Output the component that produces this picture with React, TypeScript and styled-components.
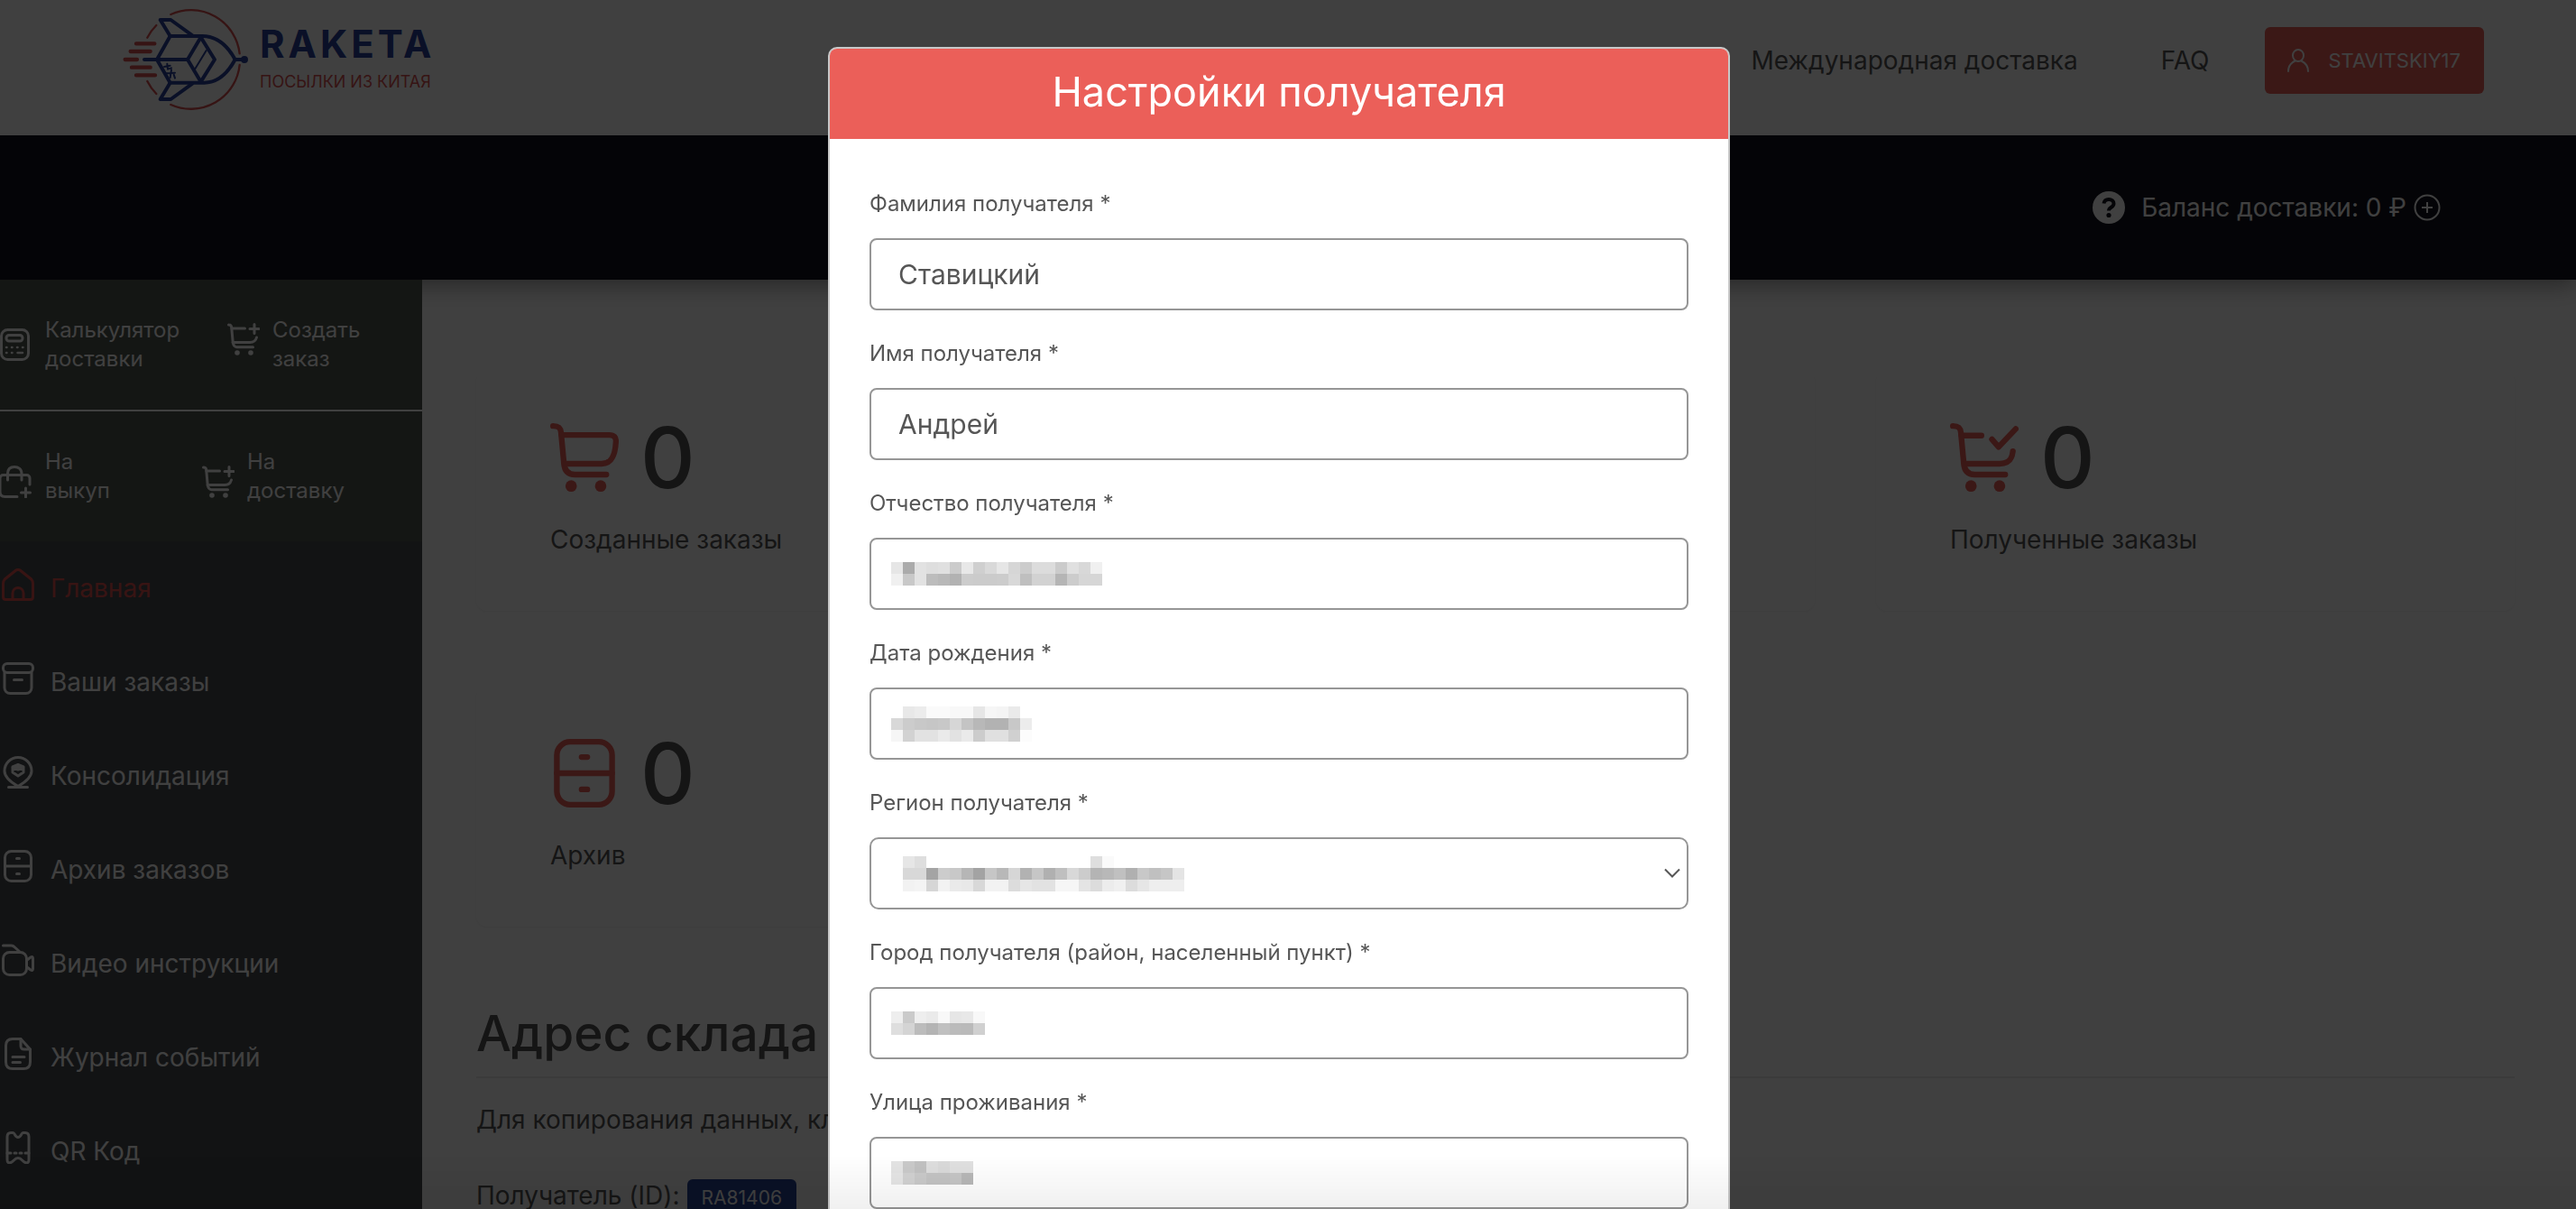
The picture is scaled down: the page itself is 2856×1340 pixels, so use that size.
import React from 'react';
import styled, { createGlobalStyle } from 'styled-components';

const font = 'Inter, "Open Sans", "Noto Sans", sans-serif';
const red = '#eb5f59';
const ink = '#565656';

const GlobalStyle = createGlobalStyle`
  *, *::before, *::after { box-sizing: border-box; }
  body { margin: 0; font-family: ${font}; color: ${ink}; background: #fff; }
  a { color: inherit; text-decoration: none; }
  button, input, select { font: inherit; }
  h1, h2, p { margin: 0; font-weight: 400; }
`;

const Page = styled.div`
  height: 100vh;
  overflow: hidden;
  display: flex;
  flex-direction: column;
`;

/* ---------- top bars ---------- */

const Header = styled.header`
  position: relative;
  z-index: 1;
  flex: none;
  height: 150px;
  display: flex;
  align-items: center;
  justify-content: space-between;
  padding: 0 102px 16px 136px;
  background: #fff;
`;

const Logo = styled.a`
  display: flex;
  align-items: center;
  gap: 12px;
  padding-bottom: 4px;
`;

const LogoText = styled.span`
  display: flex;
  flex-direction: column;
  gap: 8px;
`;

const LogoName = styled.strong`
  font-size: 42px;
  line-height: 44px;
  font-weight: 700;
  letter-spacing: 4px;
  color: #28409c;
`;

const LogoTagline = styled.span`
  font-size: 18px;
  line-height: 24px;
  color: #d84f4f;
`;

const Nav = styled.nav`
  display: flex;
  align-items: center;
  font-size: 28px;
  line-height: 40px;
  gap: 92px;
`;

const NavEnd = styled.div`
  display: flex;
  align-items: center;
  gap: 62px;
`;

const UserButton = styled.button`
  display: flex;
  align-items: center;
  gap: 20px;
  height: 74px;
  padding: 0 26px 0 24px;
  border: 0;
  border-radius: 6px;
  background: ${red};
  color: #fff;
  font-size: 22px;
`;

const BalanceBar = styled.div`
  flex: none;
  height: 160px;
  display: flex;
  align-items: center;
  justify-content: flex-end;
  padding-right: 150px;
  background: #13131c;
  color: #fff;
  font-size: 28px;
  line-height: 40px;
  box-shadow: 0 6px 24px rgba(0, 0, 0, 0.4);
`;

const Balance = styled.span`
  margin: 0 8px 0 18px;
`;

const IconButton = styled.button`
  display: flex;
  padding: 0;
  border: 0;
  background: none;
  color: inherit;
`;

/* ---------- sidebar ---------- */

const Columns = styled.div`
  flex: 1;
  min-height: 0;
  display: flex;
`;

const Sidebar = styled.aside`
  position: relative;
  flex: none;
  width: 468px;
  background: #484c50;
  color: #fff;
`;

const QuickRow = styled.div<{ $first: number; $line?: boolean }>`
  display: grid;
  grid-template-columns: ${(p) => p.$first}px 1fr;
  align-items: center;
  height: ${(p) => (p.$line ? 146 : 144)}px;
  border-bottom: ${(p) => (p.$line ? '2px solid #fff' : '0')};
  background: #505750;
`;

const QuickLink = styled.a`
  display: flex;
  align-items: center;
  gap: 14px;
  font-size: 24px;
  line-height: 32px;
`;

const QuickText = styled.span<{ $width: number }>`
  width: ${(p) => p.$width}px;
`;

const Menu = styled.nav`
  display: flex;
  flex-direction: column;
`;

const MenuItem = styled.a<{ $active?: boolean }>`
  display: flex;
  align-items: center;
  gap: 18px;
  height: 104px;
  padding-left: 2px;
  font-size: 28px;
  line-height: 40px;
  color: ${(p) => (p.$active ? '#e0504e' : '#fff')};
  svg { margin-bottom: 8px; }
`;

/* ---------- dashboard ---------- */

const Main = styled.main`
  flex: 1;
  min-width: 0;
  padding: 101px 68px 0 60px;
`;

const Cards = styled.div`
  display: grid;
  grid-template-columns: repeat(3, 1fr);
  gap: 84px 68px;
`;

const Card = styled.section`
  height: 266px;
  padding: 45px 82px;
  border-radius: 12px;
  box-shadow: 0 1px 3px rgba(0, 0, 0, 0.06);
`;

const Counter = styled.div`
  display: flex;
  align-items: center;
  gap: 24px;
  height: 102px;
  font-size: 94px;
  line-height: 102px;
  font-weight: 500;
`;

const CardLabel = styled.p`
  margin-top: 20px;
  font-size: 28px;
  line-height: 40px;
`;

const Title = styled.h1`
  margin-top: 82px;
  padding-bottom: 12px;
  border-bottom: 2px solid #ececec;
  font-size: 55px;
  line-height: 72px;
  font-weight: 500;
`;

const Note = styled.p`
  margin-top: 26px;
  font-size: 28px;
  line-height: 40px;
`;

const Recipient = styled.div`
  display: flex;
  align-items: baseline;
  gap: 8px;
  margin-top: 44px;
  font-size: 28px;
  line-height: 40px;
`;

const Badge = styled.button`
  height: 42px;
  padding: 0 16px;
  border: 0;
  border-radius: 6px;
  background: #2a4496;
  color: #fff;
  font-size: 21px;
`;

/* ---------- modal ---------- */

const Backdrop = styled.div`
  position: fixed;
  inset: 0;
  z-index: 2;
  overflow: hidden;
  display: flex;
  justify-content: center;
  align-items: flex-start;
  padding: 52px 20px 52px 0;
  background: rgba(0, 0, 0, 0.75);
`;

const Dialog = styled.div`
  flex: none;
  width: 1000px;
  max-width: 100%;
  border: 2px solid #c8c8c8;
  border-radius: 10px;
  background: #fff;
  overflow: hidden;
`;

const DialogTitle = styled.h2`
  height: 100px;
  padding-bottom: 4px;
  background: ${red};
  color: #fff;
  font-size: 45px;
  line-height: 96px;
  text-align: center;
`;

const Form = styled.form`
  display: flex;
  flex-direction: column;
  gap: 30px;
  padding: 54px 44px;
`;

const FieldGroup = styled.div`
  display: flex;
  flex-direction: column;
  gap: 20px;
`;

const FieldLabel = styled.label`
  font-size: 24px;
  line-height: 36px;
`;

const FieldBox = styled.div`
  display: grid;
  align-items: center;
  & > * { grid-area: 1 / 1; }
`;

const Input = styled.input`
  width: 100%;
  height: 80px;
  padding: 0 30px;
  border: 2px solid #969696;
  border-radius: 8px;
  background: transparent;
  color: ${ink};
  font-size: 30px;
  outline: none;
`;

const Select = styled.select`
  appearance: none;
  width: 100%;
  height: 80px;
  padding: 0 30px;
  border: 2px solid #969696;
  border-radius: 10px;
  background: transparent;
  color: ${ink};
  font-size: 30px;
`;

const Chevron = styled.svg`
  justify-self: end;
  margin-right: 8px;
  pointer-events: none;
`;

const Mosaic = styled.svg<{ $inset: number }>`
  margin-left: ${(p) => p.$inset}px;
  pointer-events: none;
`;

const BottomShade = styled.div`
  position: fixed;
  inset: auto 0 0 0;
  z-index: 3;
  height: 60px;
  background: linear-gradient(rgba(0, 0, 0, 0), rgba(0, 0, 0, 0.06));
  pointer-events: none;
`;

/* ---------- icons ---------- */

type IconName =
  | 'calc' | 'cartPlus' | 'bagPlus' | 'home' | 'box' | 'pin' | 'drawer'
  | 'video' | 'doc' | 'ticket' | 'cart' | 'cartCheck';

const glyphs: Record<IconName, React.ReactNode> = {
  calc: (
    <>
      <rect x="1.500" y="1.500" width="30" height="33" rx="7" />
      <rect x="7" y="7.500" width="18" height="6.500" rx="3" />
      <path d="M7 21h.5M13 21h.5M19 21h.5M25 21h.5M7 27h.5M13 27h.5M19.500 27h5.500" strokeWidth="2.500" />
    </>
  ),
  cartPlus: (
    <>
      <path d="M1.500 2c2 0 3 .6 3.200 2.800l1.400 15.200c.3 4.500 1.700 6.700 4.500 6.700H28.500" />
      <path d="M5 6h14.500M6 21.500h19c4 0 6.500-1.500 7.500-5.500M30 1.500v10M25 6.500h10" />
      <circle cx="11" cy="33" r="2.800" fill="currentColor" stroke="none" />
      <circle cx="26" cy="33" r="2.800" fill="currentColor" stroke="none" />
    </>
  ),
  bagPlus: (
    <>
      <path d="M33 21v-7c0-2-1.500-3.500-3.500-3.500h-26C1.500 10.500 0 12 0 14v15c0 3.500 2 5.500 5.500 5.500H19" />
      <path d="M8.500 16V9c0-5 3-7.500 7.500-7.500S24 4 24 9v7M28.500 25v10M23.500 30h10" />
    </>
  ),
  home: (
    <>
      <path d="M1.500 17c0-2 .5-3.500 1.800-5L14.500 3c2.200-1.900 4.800-1.900 7 0l11.200 9c1.300 1.500 1.800 3 1.800 5v14.500c0 2-1 3-3 3h-27c-2 0-3-1-3-3z" />
      <path d="M12 34v-6.500c0-8 12-8 12 0V34" />
    </>
  ),
  box: (
    <>
      <rect x="1.500" y="1.500" width="33" height="10" rx="4.500" />
      <path d="M3 11.500V28c0 4 2.500 6.500 6.500 6.500h17c4 0 6.500-2.500 6.500-6.500V11.500M13.500 19.500h9" />
    </>
  ),
  pin: (
    <>
      <path d="M7.500 34.500h21M18 33.500C10 29 3 24 3 16.500a15 15 0 0 1 30 0C33 24 26 29 18 33.500z" />
      <path d="M12 13l6 2 6-2v5l-6 4-6-4z" />
      <path d="M12 12l6-2.500 6 2.500-6 2z" fill="currentColor" />
    </>
  ),
  drawer: (
    <>
      <rect x="3.500" y="1.500" width="29" height="33" rx="7" />
      <path d="M3.500 18h29M16.500 9.500h3M16.500 26.500h3" />
    </>
  ),
  video: (
    <>
      <rect x="1.500" y="9.500" width="26" height="25" rx="7" />
      <path d="M1.500 2h9c2 0 3 1 4 2l6 5.500M28 18l4-3c1.500-1 2.500-.5 2.500 1.500v11c0 2-1 2.500-2.500 1.500l-4-3" />
    </>
  ),
  doc: (
    <>
      <path d="M21 1.500H12C7 1.500 4.500 4 4.500 9v18c0 5 2.500 7.500 7.500 7.500h12c5 0 7.500-2.500 7.500-7.500V13z" />
      <path d="M21 1.500V9c0 3 1 4 4 4h6.500M12 21.500h13M12 27.500h8.500" />
    </>
  ),
  ticket: (
    <>
      <path d="M6 6c0-3 1-4.500 4-4.500h2.500c2 0 2 5 5.500 5s3.500-5 5.500-5H26c3 0 4 1.500 4 4.500v25c0 3-1 4.500-4 3.500-3-1-4-5-8-5s-5 4-8 5-4-.5-4-3.500z" />
      <path d="M6 24h4M14 24h2M20 24h2M26 24h4" />
    </>
  ),
  cart: (
    <>
      <path d="M1.500 1.500c3 0 4 1 4.200 3.500L7.200 21c.3 4 2.300 6 5.800 6h16.500" />
      <path d="M6 6.200h25c2.500 0 3.700 1.200 3.500 3.700-.4 7.500-2.500 11.400-7.500 11.400H7.500" />
      <circle cx="11" cy="33" r="3" fill="currentColor" stroke="none" />
      <circle cx="26.500" cy="33" r="3" fill="currentColor" stroke="none" />
    </>
  ),
  cartCheck: (
    <>
      <path d="M6 6.500h10.500M22 8.500l3.500 4 9-9.500" />
      <path d="M1.500 1.500c3 0 4 1 4.200 3.500L7.200 21c.3 4 2.300 6 5.800 6h16" />
      <path d="M7.500 21.300H26c4.500 0 6.500-2 7-6.500" />
      <circle cx="11" cy="33" r="3" fill="currentColor" stroke="none" />
      <circle cx="26" cy="33" r="3" fill="currentColor" stroke="none" />
    </>
  ),
};

function Icon({ name, size = 36, height = size, align = 'xMidYMid', color = 'currentColor' }: {
  name: IconName; size?: number; height?: number; align?: string; color?: string;
}) {
  return (
    <svg
      width={size}
      height={height}
      viewBox="0 0 36 36"
      preserveAspectRatio={align}
      fill="none"
      stroke="currentColor"
      color={color}
      strokeWidth={3}
      strokeLinecap="round"
      strokeLinejoin="round"
      aria-hidden="true"
    >
      {glyphs[name]}
    </svg>
  );
}

function RocketLogo() {
  return (
    <svg width="140" height="113" viewBox="408 27 420 339" fill="none" strokeLinecap="round" strokeLinejoin="round" aria-hidden="true">
      <g stroke="#d84f4f" strokeWidth="7">
        <path d="M568 48A163 163 0 0 1 797 178M797 216A163 163 0 0 1 568 348M490 125Q502 102 520 84M490 270Q502 294 520 312" />
        <path strokeWidth="13" d="M453 145H514M434 171H500M416 198H456M438 224H500M453 250H516" />
      </g>
      <g stroke="#28409c" strokeWidth="12">
        <path d="M640 118L568 66L533 66L566 120M566 275L533 330L568 330L640 278" />
        <path d="M566 120H672C722 120 756 150 782 198C756 246 722 275 680 275H566L522 198Z" />
        <path d="M668 124L624 198L668 272L714 198ZM480 198H624M782 198H812" />
        <circle cx="813" cy="198" r="6" />
        <path strokeWidth="6" d="M648 230L686 168M546 222l20-4M556 212l2 18l12-4M552 244l30-2M570 232l-4 26M578 248l4 12" />
      </g>
    </svg>
  );
}

/* ---------- redacted values, one grey level per block ---------- */

const masks = {
  patronymic: [
    'e6 ab e2 de e0 cb e8 cf d9 e6 d6 cc dc dc cb e0 d8 f0',
    'f0 c8 e2 bc b8 b2 cc cb cb cc d8 bf d2 d2 b5 cc d6 d6',
  ],
  birthday: [
    'ff e8 ec fa fa f8 f8 e6 f6 f4 ea ff',
    'd8 cc c8 c6 c8 d6 c4 b8 b2 b2 c8 ec',
    'f6 d2 e2 e2 ea e2 ea cc e0 e0 d0 fc',
  ],
  region: [
    'e6 de ff ff ff ff ff ff ff ff ff ff ff ff ff ff de fa ff ff ff ff ff ff',
    'd8 d8 a4 cc c8 b6 a3 c6 b8 d6 b2 c6 b0 bf d8 cc b4 b8 c0 b0 c8 c0 c6 e4',
    'f2 f4 d6 f2 ea e8 d8 f2 f2 dc e6 e2 e2 f6 f6 e4 dc ec f0 dc e6 ee ee ee',
  ],
  city: ['ee ca ee ea f8 e6 e8 f8', 'de d4 bc b4 c0 bb ba d0'],
  street: ['e4 ca c2 de da e0 e0', 'e6 d2 ca c4 c4 c6 b8'],
};

function Mask({ rows, inset = 24 }: { rows: string[]; inset?: number }) {
  const cells = rows.map((r) => r.split(' '));
  return (
    <Mosaic
      $inset={inset}
      width={cells[0].length * 13}
      height={cells.length * 13}
      shapeRendering="crispEdges"
      aria-hidden="true"
    >
      {cells.map((row, y) =>
        row.map((c, x) => (
          <rect key={`${x}-${y}`} x={x * 13} y={y * 13} width="13" height="13" fill={`#${c}${c}${c}`} />
        )),
      )}
    </Mosaic>
  );
}

function TextField({ id, label, value, mask }: { id: string; label: string; value?: string; mask?: string[] }) {
  return (
    <FieldGroup>
      <FieldLabel htmlFor={id}>{label} *</FieldLabel>
      <FieldBox>
        <Input id={id} type="text" defaultValue={value} />
        {mask && <Mask rows={mask} />}
      </FieldBox>
    </FieldGroup>
  );
}

const menu: { icon: IconName; text: string }[] = [
  { icon: 'home', text: 'Главная' },
  { icon: 'box', text: 'Ваши заказы' },
  { icon: 'pin', text: 'Консолидация' },
  { icon: 'drawer', text: 'Архив заказов' },
  { icon: 'video', text: 'Видео инструкции' },
  { icon: 'doc', text: 'Журнал событий' },
  { icon: 'ticket', text: 'QR Код' },
];

function StatCard({ icon, label }: { icon: IconName; label: string }) {
  return (
    <Card>
      <Counter>
        <Icon name={icon} size={76} color={red} />
        0
      </Counter>
      <CardLabel>{label}</CardLabel>
    </Card>
  );
}

export default function App() {
  return (
    <>
      <GlobalStyle />
      <Page>
        <Header>
          <Logo href="#">
            <RocketLogo />
            <LogoText>
              <LogoName>RAKETA</LogoName>
              <LogoTagline>ПОСЫЛКИ ИЗ КИТАЯ</LogoTagline>
            </LogoText>
          </Logo>
          <Nav>
            <a href="#">Международная доставка</a>
            <NavEnd>
              <a href="#">FAQ</a>
              <UserButton type="button">
                <svg width="26" height="26" viewBox="0 0 26 26" fill="none" stroke="currentColor" strokeWidth="2" strokeLinecap="round" aria-hidden="true">
                  <ellipse cx="13" cy="7.500" rx="6" ry="6.500" />
                  <path d="M2 25c0-6 3.500-9.500 7.500-11.500M24 25c0-6-3.500-9.500-7.500-11.500" />
                </svg>
                STAVITSKIY17
              </UserButton>
            </NavEnd>
          </Nav>
        </Header>

        <BalanceBar>
          <IconButton type="button" aria-label="Справка">
            <svg width="36" height="36" viewBox="0 0 36 36" aria-hidden="true">
              <circle cx="18" cy="18" r="18" fill="#fff" />
              <path d="M12.500 13.500c.5-3 2.500-4.500 5.500-4.500 3.300 0 5.500 2 5.500 4.700 0 4.300-5.500 3.800-5.500 7.800" fill="none" stroke="#13131c" strokeWidth="4" />
              <circle cx="18" cy="26.500" r="2.600" fill="#13131c" />
            </svg>
          </IconButton>
          <Balance>Баланс доставки: 0 ₽</Balance>
          <IconButton type="button" aria-label="Пополнить">
            <svg width="30" height="30" viewBox="0 0 30 30" fill="none" stroke="#fff" strokeWidth="2" aria-hidden="true">
              <circle cx="15" cy="15" r="13.500" />
              <path d="M15 9v12M9 15h12" />
            </svg>
          </IconButton>
        </BalanceBar>

        <Columns>
          <Sidebar>
            <QuickRow $first={252} $line>
              <QuickLink href="#">
                <Icon name="calc" />
                <QuickText $width={160}>Калькулятор доставки</QuickText>
              </QuickLink>
              <QuickLink href="#">
                <Icon name="cartPlus" height={48} align="xMidYMin" />
                <QuickText $width={100}>Создать заказ</QuickText>
              </QuickLink>
            </QuickRow>
            <QuickRow $first={224}>
              <QuickLink href="#">
                <Icon name="bagPlus" height={48} align="xMidYMax" />
                <QuickText $width={80}>На выкуп</QuickText>
              </QuickLink>
              <QuickLink href="#">
                <Icon name="cartPlus" height={48} align="xMidYMax" />
                <QuickText $width={120}>На доставку</QuickText>
              </QuickLink>
            </QuickRow>
            <Menu>
              {menu.map((m) => (
                <MenuItem key={m.text} href="#" $active={m.icon === 'home'}>
                  <Icon name={m.icon} />
                  {m.text}
                </MenuItem>
              ))}
            </Menu>
          </Sidebar>

          <Main>
            <Cards>
              <StatCard icon="cart" label="Созданные заказы" />
              <Card />
              <StatCard icon="cartCheck" label="Полученные заказы" />
              <StatCard icon="drawer" label="Архив" />
            </Cards>
            <Title>Адрес склада</Title>
            <Note>Для копирования данных, клик</Note>
            <Recipient>
              Получатель (ID):
              <Badge type="button">RA81406</Badge>
            </Recipient>
          </Main>
        </Columns>
      </Page>

      <Backdrop>
        <Dialog role="dialog" aria-modal="true" aria-labelledby="dialog-title">
          <DialogTitle id="dialog-title">Настройки получателя</DialogTitle>
          <Form>
            <TextField id="surname" label="Фамилия получателя" value="Ставицкий" />
            <TextField id="name" label="Имя получателя" value="Андрей" />
            <TextField id="patronymic" label="Отчество получателя" mask={masks.patronymic} />
            <TextField id="birthday" label="Дата рождения" mask={masks.birthday} />
            <FieldGroup>
              <FieldLabel htmlFor="region">Регион получателя *</FieldLabel>
              <FieldBox>
                <Select id="region" defaultValue="">
                  <option value="" />
                </Select>
                <Mask rows={masks.region} inset={37} />
                <Chevron width="20" height="12" viewBox="0 0 20 12" fill="none" stroke={ink} strokeWidth="2" aria-hidden="true">
                  <path d="M2 1.500l8 8 8-8" />
                </Chevron>
              </FieldBox>
            </FieldGroup>
            <TextField id="city" label="Город получателя (район, населенный пункт)" mask={masks.city} />
            <TextField id="street" label="Улица проживания" mask={masks.street} />
          </Form>
        </Dialog>
      </Backdrop>
      <BottomShade />
    </>
  );
}
